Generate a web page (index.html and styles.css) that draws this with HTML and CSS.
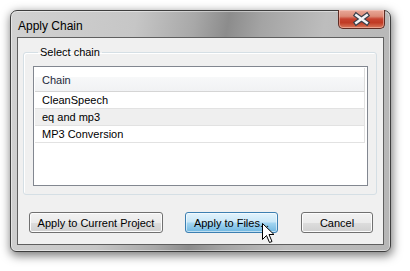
FILE: index.html
```html
<!DOCTYPE html>
<html>
<head>
<meta charset="utf-8">
<link rel="stylesheet" href="styles.css">
</head>
<body>
<div class="window">
  <div class="titlebar">
    <span class="title">Apply Chain</span>
    <div class="close">
      <svg width="47" height="19" viewBox="0 0 47 19">
        <path d="M18 5 L29 13 M29 5 L18 13" stroke="#3a3f4a" stroke-width="5" stroke-linecap="square"/>
        <path d="M18 5 L29 13 M29 5 L18 13" stroke="#f4f4f6" stroke-width="2.6" stroke-linecap="square"/>
      </svg>
    </div>
  </div>
  <div class="client">
    <fieldset class="group">
      <legend>Select chain</legend>
      <div class="listbox">
        <div class="header"><span>Chain</span></div>
        <div class="row">CleanSpeech</div>
        <div class="row alt">eq and mp3</div>
        <div class="row">MP3 Conversion</div>
      </div>
    </fieldset>
    <div class="buttons">
      <button class="btn b1">Apply to Current Project</button>
      <button class="btn b2 hot">Apply to Files...</button>
      <button class="btn b3">Cancel</button>
    </div>
  </div>
</div>
<svg class="cursor" width="13" height="21" viewBox="0 0 13 21">
  <path d="M0.5 0.5 L0.5 16.5 L4.5 12.5 L7.5 19.5 L10 18.5 L7 11.5 L12 11.5 Z" fill="#fff" stroke="#000" stroke-width="1" stroke-linejoin="miter"/>
</svg>
</body>
</html>
```

FILE: styles.css
```css
html, body {
  margin: 0;
  padding: 0;
  background: #ffffff;
}
body {
  width: 410px;
  height: 271px;
  overflow: hidden;
  font-family: "Liberation Sans", Arial, sans-serif;
  font-size: 11px;
  color: #000;
}
.window {
  box-sizing: border-box;
  width: 381px;
  height: 242px;
  margin: 10px 0 0 10px;
  border: 1px solid #3e3e3e;
  border-radius: 7px 7px 6px 6px;
  padding: 0 6px 6px 6px;
  display: flex;
  flex-direction: column;
  background: linear-gradient(100deg, #d2d2d2 0%, #c6c6c6 30%, #a8a8a8 44%, #8c8c8c 52%, #a4a4a4 60%, #bdbdbd 75%, #b6b6b6 100%);
  box-shadow: inset 0 0 0 1px rgba(255,255,255,0.45), 1px 3px 10px 1px rgba(0,0,0,0.5);
}
.titlebar {
  height: 26px;
  display: flex;
  justify-content: space-between;
  align-items: flex-start;
  flex: none;
}
.title {
  font-size: 12px;
  line-height: 14px;
  margin: 8px 0 0 1px;
  color: #000;
}
.close {
  width: 47px;
  height: 19px;
  margin: -1px -1px 0 0;
  box-sizing: border-box;
  border: 1px solid #5d2c24;
  border-top: none;
  border-radius: 0 0 5px 5px;
  background: linear-gradient(180deg, #e9a99a 0%, #dc8a76 35%, #c74330 50%, #c03a24 70%, #d9795c 100%);
  box-shadow: inset 0 0 0 1px rgba(255,220,210,0.45);
  display: flex;
}
.close svg { display: block; }
.client {
  flex: 1;
  border: 1px solid #5f5f5f;
  background: #f0f0f0;
  padding: 8px 6px 0 5px;
  display: flex;
  flex-direction: column;
}
.group {
  margin: 0;
  padding: 7px 8px 8px 9px;
  border: 1px solid #d5dfe5;
  border-radius: 3px;
  box-shadow: inset 1px 1px 0 #fff;
}
.group legend {
  margin-left: 5px;
  padding: 0 2px;
  line-height: 13px;
  font-size: 11px;
}
.listbox {
  height: 120px;
  box-sizing: border-box;
  border: 1px solid #828790;
  background: #fff;
  padding: 1px 2px 1px 1px;
}
.header {
  height: 24px;
  box-sizing: border-box;
  padding-left: 7px;
  display: flex;
  align-items: center;
  border-bottom: 1px solid #d5d5d5;
  border-right: 1px solid #dcdcdc;
  background: linear-gradient(180deg, #ffffff 0%, #ffffff 40%, #f7f8f9 41%, #f1f2f4 100%);
  color: #1e2a3a;
}
.row {
  height: 17px;
  box-sizing: border-box;
  padding-left: 7px;
  line-height: 16px;
  border-bottom: 1px solid #e2e2e2;
  border-right: 1px solid #e2e2e2;
}
.row.alt {
  background: #efefef;
}
.buttons {
  display: flex;
  margin-top: 17px;
  padding-left: 6px;
}
.btn {
  height: 21px;
  box-sizing: border-box;
  font-family: "Liberation Sans", Arial, sans-serif;
  font-size: 11px;
  color: #000;
  border: 1px solid #707070;
  border-radius: 3px;
  padding: 0;
  background: linear-gradient(180deg, #f2f2f2 0%, #ebebeb 50%, #dddddd 51%, #cfcfcf 100%);
  box-shadow: inset 0 0 0 1px #fcfcfc;
}
.b1 { width: 134px; }
.b2 { width: 93px; margin-left: 22px; }
.b3 { width: 72px; margin-left: 23px; }
.btn.hot {
  border-color: #3c7fb1;
  background: linear-gradient(180deg, #e3f3fc 0%, #c8e7f8 48%, #a4d6f2 52%, #6fb6e0 100%);
  box-shadow: inset 0 0 0 1px rgba(255,255,255,0.55);
}
.cursor {
  position: absolute;
  left: 262px;
  top: 223px;
}
```
